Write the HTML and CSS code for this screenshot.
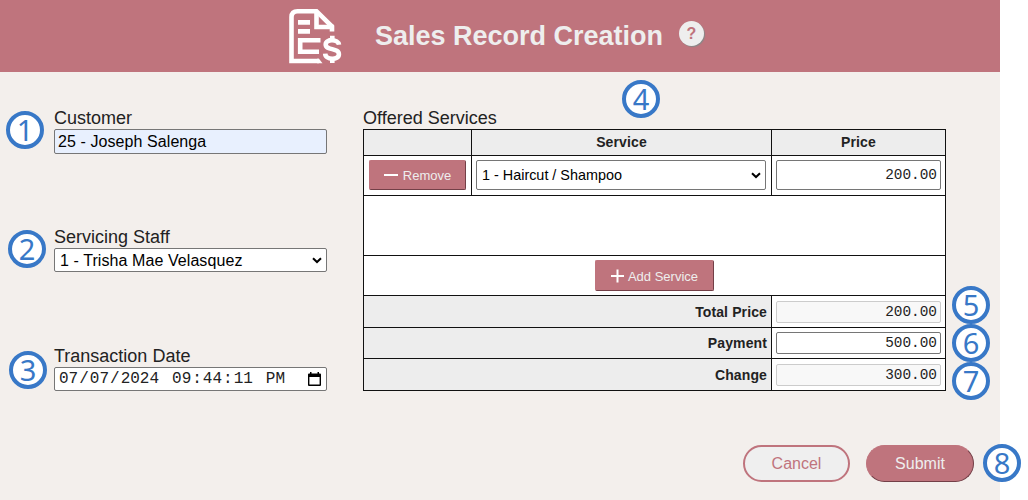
FILE: index.html
```html
<!DOCTYPE html>
<html lang="en">
<head>
<meta charset="utf-8">
<title>Sales Record Creation</title>
<link rel="stylesheet" href="styles.css">
</head>
<body>
<div class="page">
  <header class="header">
    <svg class="logo" width="56" height="56" viewBox="0 0 56 56" fill="none" stroke="#fff" stroke-width="4.6">
      <path d="M31 53H3.5V9Q3.5 3.2 9.5 3.2H28.5L44 18.5V23.6"/>
      <path d="M28.5 3V19H46"/>
      <path d="M10 14.4H22M10 23.4H22M32.5 32.3H12.2V43.8H31"/>
      <path d="M29 50.7H31L34.5 55.3H29Z" fill="#fff" stroke="none"/>
      <path d="M51 36.8C50.5 30.8 37.7 30.6 37.7 36.4C37.7 42.8 50.9 39.4 50.9 46.2C50.9 52.6 37.4 52.2 37.2 45.6"/>
      <path d="M44.3 27.7V33M44.3 50V55"/>
    </svg>
    <h1 class="title">Sales Record Creation</h1>
    <span class="help">?</span>
  </header>
  <main class="main">
    <section class="fields">
      <div class="field">
        <label class="label">Customer</label>
        <div class="control autofilled">25 - Joseph Salenga</div>
      </div>
      <div class="field">
        <label class="label">Servicing Staff</label>
        <div class="control select staff">1 - Trisha Mae Velasquez
          <svg class="chevron" width="10" height="7" viewBox="0 0 10 7"><path d="M1 1.2L5 5L9 1.2" fill="none" stroke="#000" stroke-width="2"/></svg>
        </div>
      </div>
      <div class="field">
        <label class="label">Transaction Date</label>
        <div class="control date">
          <span class="group"><span class="part">07</span>/<span class="part">07</span>/<span class="part">2024</span></span>
          <span class="group"><span class="part">09</span>:<span class="part">44</span>:<span class="part">11</span></span>
          <span class="group"><span class="part">PM</span></span>
          <svg class="calendar" width="13" height="15" viewBox="0 0 13 15"><path d="M0 2.5Q0 1.5 1 1.5H2V0H3.5V1.5H9.5V0H11V1.5H12Q13 1.5 13 2.5V13Q13 14 12 14H1Q0 14 0 13ZM1.4 5V12.6H11.6V5Z" fill="#000" fill-rule="evenodd"/></svg>
        </div>
      </div>
    </section>
    <section class="services">
      <label class="label">Offered Services</label>
      <div class="table">
        <div class="cell head"></div>
        <div class="cell head">Service</div>
        <div class="cell head">Price</div>
        <div class="cell item"><button class="action remove"><svg width="14" height="14" viewBox="0 0 14 14"><path d="M0 7H14" stroke="#fff" stroke-width="2"/></svg>Remove</button></div>
        <div class="cell item"><div class="control select small">1 - Haircut / Shampoo
          <svg class="chevron" width="10" height="7" viewBox="0 0 10 7"><path d="M1 1.2L5 5L9 1.2" fill="none" stroke="#000" stroke-width="2"/></svg>
        </div></div>
        <div class="cell price"><div class="control amount tall">200.00</div></div>
        <div class="cell wide"></div>
        <div class="cell wide"><button class="action add"><svg width="13" height="14" viewBox="0 0 13 14"><path d="M0 7H13M6.5 0.5V13.5" stroke="#fff" stroke-width="2"/></svg>Add Service</button></div>
        <div class="cell sum">Total Price</div>
        <div class="cell"><div class="control amount disabled">200.00</div></div>
        <div class="cell sum">Payment</div>
        <div class="cell"><div class="control amount">500.00</div></div>
        <div class="cell sum">Change</div>
        <div class="cell"><div class="control amount disabled">300.00</div></div>
      </div>
    </section>
  </main>
  <footer class="footer">
    <button class="pill cancel">Cancel</button>
    <button class="pill submit">Submit</button>
  </footer>
</div>
<span class="badge b1">1</span>
<span class="badge b2">2</span>
<span class="badge b3">3</span>
<span class="badge b4">4</span>
<span class="badge b5">5</span>
<span class="badge b6">6</span>
<span class="badge b7">7</span>
<span class="badge b8">8</span>
</body>
</html>
```
FILE: styles.css
```css
* { box-sizing: border-box; }
body {
  margin: 0;
  height: 500px;
  position: relative;
  overflow: hidden;
  background: #fff;
  color: #222;
  font-family: "Liberation Sans", Arial, sans-serif;
}
.page { width: 1000px; height: 500px; background: #f3efec; display: flex; flex-direction: column; }
.header {
  height: 72px;
  flex: none;
  background: #bf747d;
  display: flex;
  align-items: flex-start;
  padding: 8px 0 0 288px;
}
.logo { flex: none; }
.title { margin: 12px 0 0 31px; font-size: 27px; line-height: 32px; color: #eee; white-space: nowrap; width: 288px; }
.help {
  width: 25px;
  height: 25px;
  margin: 13px 0 0 16px;
  border-radius: 50%;
  background: #eee;
  box-shadow: 1px 1px 1px #888;
  color: #bf747d;
  font-size: 16px;
  font-weight: bold;
  line-height: 25px;
  text-align: center;
}
.main { flex: none; height: 319px; display: flex; padding: 36px 0 0 54px; }
.fields { width: 273px; margin-right: 36px; }
.field { height: 119px; }
.label { display: block; height: 21px; font-size: 18px; line-height: 20px; white-space: nowrap; }
.control {
  height: 24px;
  border: 1px solid #767676;
  border-radius: 2px;
  background: #fff;
  color: #000;
  font-size: 16px;
  line-height: 22px;
  padding: 0 3px;
  white-space: nowrap;
}
.autofilled { height: 25px; background: #e8f0fe; line-height: 23px; letter-spacing: 0.08px; }
.select { display: flex; align-items: center; justify-content: space-between; padding: 0 4px 0 5px; }
.staff { letter-spacing: 0.08px; padding-top: 1px; }
.date { display: flex; align-items: center; font-family: "Liberation Mono", monospace; line-height: 22px; gap: 11px; color: #222; }
.part { padding: 0 1px; }
.calendar { margin-left: auto; margin-right: 2px; }
.services { width: 583px; }
.table {
  display: grid;
  grid-template-columns: 107px 299px 173px;
  grid-template-rows: 25px 39px 59px 39px 31px 30px 31px;
  gap: 1px;
  padding: 1px;
  background: #111;
}
.cell { background: #fff; display: flex; align-items: center; justify-content: center; padding: 0 4px; }
.item { padding: 0 5px 1px 4px; }
.price { padding-bottom: 1px; }
.head, .sum { background: #ededed; font-size: 14px; font-weight: bold; letter-spacing: 0.12px; }
.head { padding-bottom: 1px; }
.wide { grid-column: 1 / 4; }
.sum { grid-column: 1 / 3; justify-content: flex-end; }
.cell .control { width: 100%; }
.small { height: 30px; font-size: 14.4px; }
.amount {
  height: 22px;
  font-family: "Liberation Mono", monospace;
  font-size: 14.4px;
  line-height: 20px;
  text-align: right;
  color: #222;
}
.tall { height: 30px; line-height: 28px; }
.disabled { background: #f8f8f8; border-color: #ccc; }
.action {
  display: flex;
  align-items: center;
  justify-content: center;
  height: 31px;
  padding: 0;
  border: 1px solid #bf747d;
  border-right-color: #733f47;
  border-bottom-color: #733f47;
  border-radius: 2px;
  background: #bf747d;
  color: #eee;
  font: 13px "Liberation Sans", Arial, sans-serif;
}
.remove { width: 97px; height: 30px; gap: 5px; margin-left: 1px; }
.add { width: 119px; gap: 4px; padding-top: 1px; }
.footer { display: flex; gap: 16px; margin: 54px 0 0 743px; }
.pill {
  width: 107px;
  height: 37px;
  border: 2px solid #bf747d;
  border-radius: 19px;
  padding: 0;
  background: #efefef;
  color: #bf747d;
  font: 16px "Liberation Sans", Arial, sans-serif;
}
.submit {
  width: 108px;
  border: 1px solid #bf747d;
  border-right-color: #733f47;
  border-bottom-color: #733f47;
  background: #bf747d;
  color: #eee;
}
/* Numbered callouts over the form */
.badge {
  position: absolute;
  width: 38px;
  height: 38px;
  border: 4px solid #3878c7;
  border-radius: 50%;
  background: #fff;
  color: #3878c7;
  font: 29px/30px "Noto Sans", "Open Sans", sans-serif;
  text-align: center;
}
.b1 { left: 6px; top: 111px; }
.b2 { left: 8px; top: 230px; }
.b3 { left: 9px; top: 351px; }
.b4 { left: 622px; top: 80px; }
.b5 { left: 952px; top: 286px; }
.b6 { left: 952px; top: 324px; }
.b7 { left: 952px; top: 362px; }
.b8 { left: 983px; top: 444px; }
```
